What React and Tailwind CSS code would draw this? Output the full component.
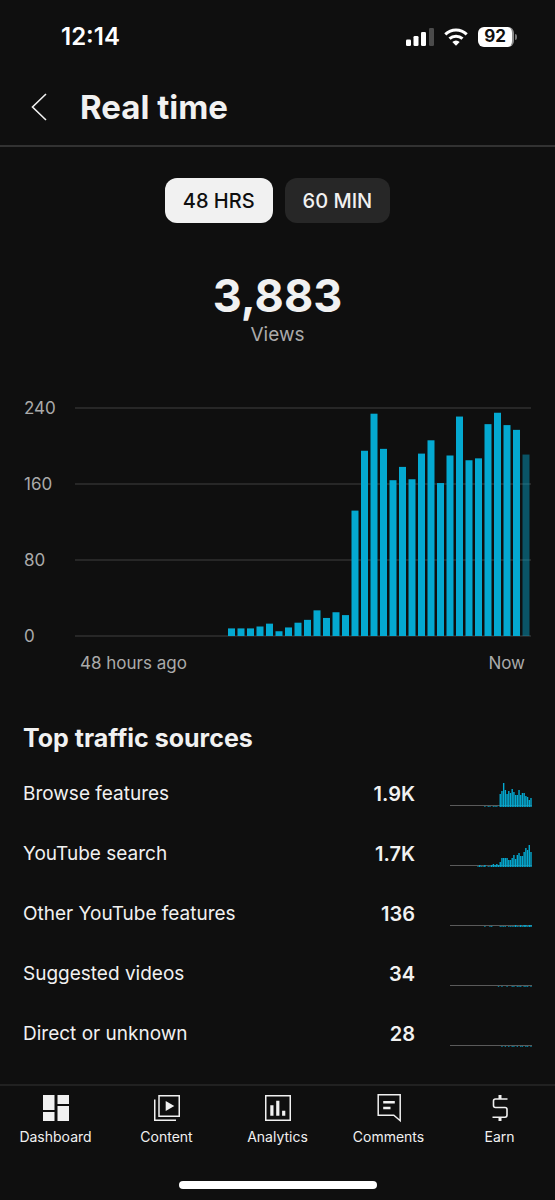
import React, { useState } from "react";

const HOURLY_VIEWS = [
  0, 0, 0, 0, 0, 0, 0, 0, 0, 0, 0, 0, 0, 0, 0, 0, 8, 8, 8, 10, 13, 5, 9, 14,
  17, 27, 19, 25, 22, 132, 195, 234, 197, 164, 178, 165, 192, 206, 161, 190,
  231, 185, 187, 223, 235, 222, 217, 191,
];

const SOURCES = [
  {
    name: "Browse features",
    views: "1.9K",
    bars: [1, 0, 1, 1, 0, 1, 1, 1, 0, 13, 16, 24, 17, 13, 16, 14, 18, 15, 12, 12, 17, 12, 14, 14, 11, 10, 7, 9],
  },
  {
    name: "YouTube search",
    views: "1.7K",
    bars: [1, 2, 1, 1, 2, 0, 1, 1, 2, 3, 2, 3, 2, 5, 9, 9, 9, 9, 7, 7, 9, 12, 8, 12, 14, 11, 11, 15, 19, 17, 22, 15],
  },
  {
    name: "Other YouTube features",
    views: "136",
    bars: [1, 0, 0, 1, 1, 0, 0, 0, 0, 1, 1, 1, 1, 0, 1, 1, 1, 1, 2, 1, 1, 2, 1, 2, 2, 1, 2, 2],
  },
  {
    name: "Suggested videos",
    views: "34",
    bars: [1, 0, 1, 0, 0, 1, 0, 0, 1, 1, 0, 1, 1, 1, 0, 1, 1, 1, 0, 1],
  },
  {
    name: "Direct or unknown",
    views: "28",
    bars: [1, 0, 1, 0, 1, 0, 1, 1, 0, 1, 0, 1, 1, 0, 1, 1, 0, 1],
  },
];

function DashboardIcon() {
  return (
    <svg width="26" height="26" viewBox="0 0 26 26" fill="currentColor" aria-hidden="true">
      <path d="M0 0h11.5v15H0zM0 17h11.5v9H0zM14.5 0H26v9H14.5zM14.5 11H26v15H14.5z" />
    </svg>
  );
}

function ContentIcon() {
  return (
    <svg width="26" height="26" viewBox="0 0 26 26" fill="none" stroke="currentColor" strokeWidth="1.5" aria-hidden="true">
      <path d="M.75 4.5v20.75H22" />
      <path d="M5 .75h20.25v20.5H5z" />
      <path d="M11.7 6v10l8.6-5z" fill="currentColor" stroke="none" />
    </svg>
  );
}

function AnalyticsIcon() {
  return (
    <svg width="26" height="26" viewBox="0 0 26 26" fill="currentColor" aria-hidden="true">
      <path d="M.75.75h24.5v24.5H.75z" fill="none" stroke="currentColor" strokeWidth="1.5" />
      <path d="M5.3 10.2h3.2v10.6H5.3zM11.2 5.7h3.2v15.1h-3.2zM17.1 15.8h3.2v5h-3.2z" />
    </svg>
  );
}

function CommentsIcon() {
  return (
    <svg width="26" height="26" viewBox="0 0 26 26" className="overflow-visible" fill="none" stroke="currentColor" aria-hidden="true">
      <path d="M2.2-.3h22v26L17.8 20.3H2.2z" strokeWidth="1.5" />
      <path d="M7.2 7.3h11.6M7.2 13h7.3" strokeWidth="2.5" />
    </svg>
  );
}

function EarnIcon() {
  return (
    <svg width="26" height="26" viewBox="0 0 26 26" fill="none" stroke="currentColor" aria-hidden="true">
      <path d="M20.5 4H8.5Q6.500 4 6.500 6V10.5Q6.500 12.500 8.500 12.500H18Q20 12.500 20 14.500V20Q20 22.200 18 22.200H5.500" strokeWidth="1.6" />
      <path d="M13 0v4M13 22v4" strokeWidth="3" />
    </svg>
  );
}

const NAV = [
  { label: "Dashboard", Icon: DashboardIcon },
  { label: "Content", Icon: ContentIcon },
  { label: "Analytics", Icon: AnalyticsIcon },
  { label: "Comments", Icon: CommentsIcon },
  { label: "Earn", Icon: EarnIcon },
];

function StatusBar() {
  return (
    <div className="flex h-[74px] items-center justify-between pr-[38px] pl-[61px] text-white">
      <span className="text-2xl font-semibold">12:14</span>
      <div className="flex items-center gap-[10px]">
        <svg width="28" height="18" viewBox="0 0 28 18" fill="currentColor" aria-hidden="true">
          <rect x="0" y="11.5" width="5" height="6.5" rx="1.3" />
          <rect x="7.5" y="8" width="5" height="10" rx="1.3" />
          <rect x="15" y="4" width="5" height="14" rx="1.3" />
          <rect x="23" y="0" width="5" height="18" rx="1.3" opacity="0.25" />
        </svg>
        <svg width="24" height="18" viewBox="0 0 24 18" fill="none" stroke="currentColor" strokeWidth="3" aria-hidden="true">
          <path d="M1.3 6.3a15.500 15.500 0 0 1 21.400 0" />
          <path d="M5.500 10.700a9.500 9.500 0 0 1 13 0" />
          <path d="M12 17.700l-3.700-3.600a5.300 5.300 0 0 1 7.400 0z" fill="currentColor" stroke="none" />
        </svg>
        <div className="flex items-center gap-px">
          <div className="flex h-5 w-9 items-center justify-center rounded-md border-r-2 border-[#8a8a8a] bg-white text-[17px] font-bold text-[#0f0f0f]">
            92
          </div>
          <div className="h-[6px] w-[2px] rounded-r-full bg-[#777]" />
        </div>
      </div>
    </div>
  );
}

function ViewsChart() {
  return (
    <div className="mt-[49px] px-6 text-[17px] text-[#aaa]">
      <div className="flex">
        <div className="flex w-[51px] shrink-0 flex-col gap-[52px] leading-6">
          <span>240</span>
          <span>160</span>
          <span>80</span>
          <span>0</span>
        </div>
        <svg
          className="mt-[11px] h-[230px] min-w-0 flex-1"
          viewBox="0 0 456 230"
          preserveAspectRatio="none"
          role="img"
          aria-label="Views per hour"
        >
          {[0, 76, 152, 228].map((y) => (
            <rect key={y} x="0" y={y} width="456" height="2" fill="#272727" />
          ))}
          {HOURLY_VIEWS.map((v, i) => (
            <rect
              key={i}
              x={1 + i * 9.5}
              y={229 - v * 0.95}
              width="7"
              height={v * 0.95}
              fill="#04a9d1"
              opacity={i === HOURLY_VIEWS.length - 1 ? 0.45 : 1}
            />
          ))}
        </svg>
      </div>
      <div className="mt-[3px] flex justify-between pr-[6px] pl-14 leading-6">
        <span>48 hours ago</span>
        <span>Now</span>
      </div>
    </div>
  );
}

function Sparkline({ bars }) {
  const step = 82 / 48;
  const start = 48 - bars.length;
  return (
    <svg className="ml-auto" width="82" height="26" viewBox="0 0 82 26" aria-hidden="true">
      <rect x="0" y="24" width="82" height="1" fill="#5a5a5a" />
      {bars.map((h, i) => (
        <rect key={i} x={(start + i) * step} y={26 - h} width="1.4" height={h} fill="#04a9d1" opacity={h > 1 ? 1 : 0.7} />
      ))}
    </svg>
  );
}

function TrafficSources() {
  return (
    <section className="mt-[47px] px-[23px]">
      <h2 className="text-[25px] leading-8 font-bold">Top traffic sources</h2>
      <table className="mt-[10px] w-full text-[19px]">
        <tbody>
          {SOURCES.map((s) => (
            <tr key={s.name} className="h-15">
              <th scope="row" className="text-left font-normal">{s.name}</th>
              <td className="text-right text-xl font-semibold">{s.views}</td>
              <td className="w-[117px]">
                <Sparkline bars={s.bars} />
              </td>
            </tr>
          ))}
        </tbody>
      </table>
    </section>
  );
}

function App() {
  const [range, setRange] = useState("48 HRS");

  return (
    <div className="flex min-h-screen flex-col bg-[#0f0f0f] font-['Inter',sans-serif] text-[#f1f1f1]">
      <StatusBar />
      <header className="flex h-[73px] items-center gap-[33px] border-b-2 border-[#323232] pb-[6px] pl-[31px]">
        <button type="button" aria-label="Back">
          <svg width="16" height="28" viewBox="0 0 16 28" fill="none" stroke="currentColor" strokeWidth="1.6" aria-hidden="true">
            <path d="M15 1L1.5 14L15 27" />
          </svg>
        </button>
        <h1 className="text-[33px] leading-10 font-bold">Real time</h1>
      </header>

      <main className="flex-1">
        <div className="mt-[31px] flex justify-center gap-3">
          {["48 HRS", "60 MIN"].map((r) => (
            <button
              key={r}
              type="button"
              aria-pressed={range === r}
              onClick={() => setRange(r)}
              className={`h-[45px] rounded-xl px-[18px] text-xl font-medium ${
                range === r ? "bg-[#f1f1f1] text-[#0f0f0f]" : "bg-[#272727] text-[#f1f1f1]"
              }`}
            >
              {r}
            </button>
          ))}
        </div>

        <div className="mt-[49px] text-center">
          <p className="text-[45px] leading-[48px] font-bold">3,883</p>
          <p className="mt-[3px] text-[19px] leading-6 text-[#aaa]">Views</p>
        </div>

        <ViewsChart />
        <TrafficSources />
      </main>

      <nav className="flex h-[97px] border-t-2 border-[#212121] pt-[9px]">
        {NAV.map(({ label, Icon }) => (
          <a key={label} href="#" className="flex flex-1 flex-col items-center gap-[6px] text-sm leading-5">
            <Icon />
            {label}
          </a>
        ))}
      </nav>
      <div className="mx-auto mb-[11px] h-2 w-[198px] rounded-full bg-white" />
    </div>
  );
}

export default App;
